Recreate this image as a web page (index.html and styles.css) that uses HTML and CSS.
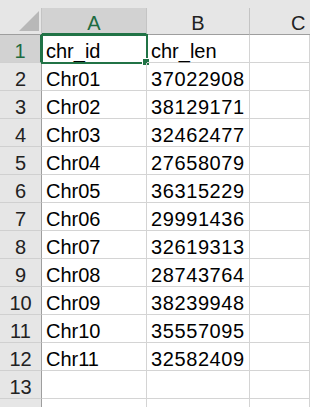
FILE: index.html
```html
<!DOCTYPE html>
<html lang="en">
<head>
  <meta charset="UTF-8" />
  <meta name="viewport" content="width=device-width, initial-scale=1.0" />
  <title>Sheet1</title>
  <link rel="stylesheet" href="styles.css">
</head>
<body>
  <div class="sheet">
    <div class="band"></div>

    <div class="hd corner">
      <svg width="42" height="27" viewBox="0 0 42 27"><polygon points="19,23 39,23 39,3" fill="#b8b8b8"/></svg>
    </div>
    <div class="hd col sel-col">A</div>
    <div class="hd col">B</div>
    <div class="hd col last">C</div>

    <div class="hd row sel-row">1</div>
    <div class="cell active">chr_id<span class="box"><span class="handle"></span></span></div>
    <div class="cell">chr_len</div>
    <div class="cell"></div>

    <div class="hd row">2</div><div class="cell">Chr01</div><div class="cell num">37022908</div><div class="cell"></div>
    <div class="hd row">3</div><div class="cell">Chr02</div><div class="cell num">38129171</div><div class="cell"></div>
    <div class="hd row">4</div><div class="cell">Chr03</div><div class="cell num">32462477</div><div class="cell"></div>
    <div class="hd row">5</div><div class="cell">Chr04</div><div class="cell num">27658079</div><div class="cell"></div>
    <div class="hd row">6</div><div class="cell">Chr05</div><div class="cell num">36315229</div><div class="cell"></div>
    <div class="hd row">7</div><div class="cell">Chr06</div><div class="cell num">29991436</div><div class="cell"></div>
    <div class="hd row">8</div><div class="cell">Chr07</div><div class="cell num">32619313</div><div class="cell"></div>
    <div class="hd row">9</div><div class="cell">Chr08</div><div class="cell num">28743764</div><div class="cell"></div>
    <div class="hd row">10</div><div class="cell">Chr09</div><div class="cell num">38239948</div><div class="cell"></div>
    <div class="hd row">11</div><div class="cell">Chr10</div><div class="cell num">35557095</div><div class="cell"></div>
    <div class="hd row">12</div><div class="cell">Chr11</div><div class="cell num">32582409</div><div class="cell"></div>
    <div class="hd row">13</div><div class="cell"></div><div class="cell"></div><div class="cell"></div>
    <div class="hd row"></div><div class="cell"></div><div class="cell"></div><div class="cell"></div>
  </div>
</body>
</html>
```

FILE: styles.css
```css
html, body { margin: 0; padding: 0; background: #fff; overflow: hidden; }
body { width: 310px; height: 407px; }

.sheet {
  display: grid;
  width: 310px;
  grid-template-columns: 42px 105px 103px 60px;
  grid-template-rows: 8px 27px repeat(14, 28px);
  font-family: "Liberation Sans", Arial, sans-serif;
  font-size: 20px;
  color: #000;
  overflow: hidden;
}

.band { grid-column: 1 / -1; background: #e6e6e6; }

.hd {
  box-sizing: border-box;
  background: #e6e6e6;
  color: #222;
  text-align: center;
  border-right: 1px solid #c4c4c4;
  border-bottom: 1px solid #c4c4c4;
  line-height: 22px;
}
.corner { border-right: 1px solid #c4c4c4; border-bottom: 1px solid #9e9e9e; line-height: 0; }
.corner svg { display: block; }
.col { padding-top: 4px; border-bottom-color: #9e9e9e; }
.last { text-align: left; padding-left: 41px; border-right: 0; }
.row { padding-top: 5px; border-right-color: #9e9e9e; border-bottom-color: #d0d0d0; }

.sel-col { background: #d2d2d2; color: #1e6b41; border-bottom: 2px solid #217346; }
.sel-row { background: #d2d2d2; color: #1e6b41; border-right: 2px solid #217346; }

.cell {
  box-sizing: border-box;
  position: relative;
  padding: 5px 0 0 4px;
  line-height: 22px;
  white-space: nowrap;
  border-right: 1px solid #d4d4d4;
  border-bottom: 1px solid #d4d4d4;
}
.num { letter-spacing: 0.6px; }

.box {
  position: absolute;
  left: -1px;
  top: -1px;
  right: -2px;
  bottom: -2px;
  border: 2px solid #217346;
}
.handle {
  position: absolute;
  right: -4px;
  bottom: -4px;
  width: 6px;
  height: 6px;
  background: #217346;
  border: 1px solid #fff;
}
```
